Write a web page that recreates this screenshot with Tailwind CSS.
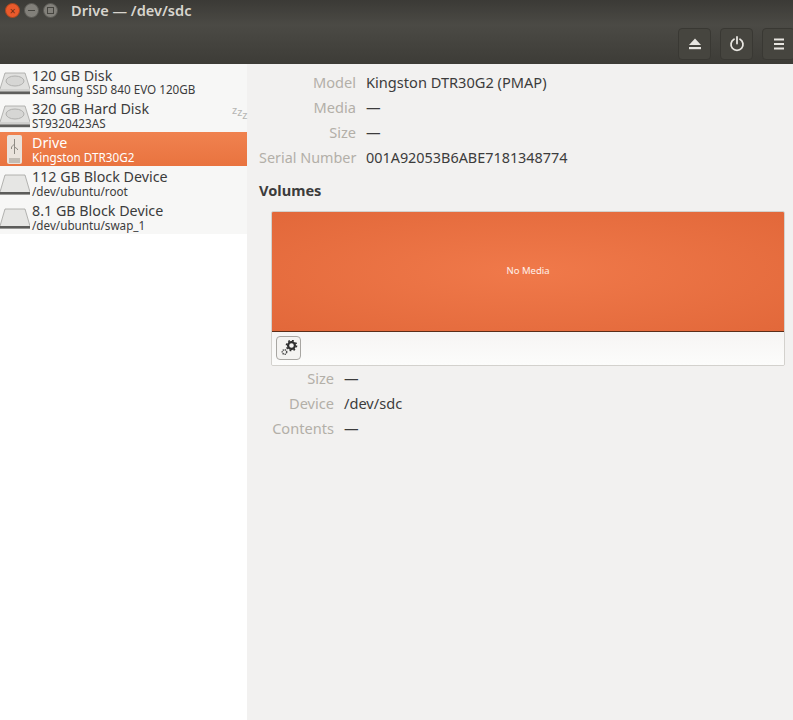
<!DOCTYPE html>
<html lang="en">
<head>
    <meta charset="UTF-8">
    <title>Drive — /dev/sdc</title>
    <script src="https://cdn.jsdelivr.net/npm/@tailwindcss/browser@4"></script>
</head>
<body class="w-[793px] h-[720px] overflow-hidden bg-[#f2f1f0] font-['Noto_Sans',sans-serif] text-[#3c3c3c]">
    <!-- window title -->
    <div class="h-[25px] flex items-start bg-gradient-to-b from-[#3b3a36] to-[#4b4a45]">
        <div class="flex items-center gap-[4px] pl-[5px] pt-[3px] w-[71px]">
            <span class="w-[15px] h-[15px] rounded-full bg-[#ea5a2c] border border-[#a8471f] flex items-center justify-center text-[10px] leading-none text-[#6b2a12]">×</span>
            <span class="w-[15px] h-[15px] rounded-full bg-[#82807a] border border-[#5a5954] flex items-center justify-center"><span class="w-[7px] h-px bg-[#45443f]"></span></span>
            <span class="w-[15px] h-[15px] rounded-full bg-[#82807a] border border-[#5a5954] flex items-center justify-center"><span class="w-[7px] h-[7px] border border-[#45443f]"></span></span>
        </div>
        <span class="text-[14.6px] leading-[21px] font-semibold text-[#d8d5ce]">Drive — /dev/sdc</span>
    </div>
    <!-- toolbar -->
    <div class="h-[39px] flex items-start justify-end gap-[9px] pt-[3px] bg-gradient-to-b from-[#4b4a45] to-[#3d3c37] overflow-hidden">
        <button class="w-[33px] h-[32px] rounded-[4px] border border-[#393833] bg-[#46453f] flex items-center justify-center">
            <svg width="14" height="14" viewBox="0 0 14 14" fill="#e8e6e1"><path d="M7 1.5 13 8H1Z"/><rect x="1" y="10" width="12" height="2.2"/></svg>
        </button>
        <button class="w-[33px] h-[32px] rounded-[4px] border border-[#393833] bg-[#46453f] flex items-center justify-center">
            <svg width="16" height="16" viewBox="0 0 16 16" fill="none" stroke="#e8e6e1" stroke-width="1.8" stroke-linecap="round"><path d="M5 3.2a6 6 0 1 0 6 0"/><path d="M8 1v6.5"/></svg>
        </button>
        <button class="w-[33px] h-[32px] -mr-[2px] rounded-[4px] border border-[#393833] bg-[#46453f] flex items-center justify-center">
            <svg width="12" height="12" viewBox="0 0 12 12" fill="#e8e6e1"><rect x="1" y="0.5" width="10" height="2"/><rect x="1" y="5" width="10" height="2"/><rect x="1" y="9.5" width="10" height="2"/></svg>
        </button>
    </div>

    <div class="flex h-[656px]">
        <!-- drive list -->
        <div class="w-[247px] h-full bg-white shrink-0">
            <div class="bg-[#f7f7f6] pt-[2px]">
                <div class="h-[32px] flex items-center relative">
                    <svg class="w-[30px] h-[24px] shrink-0 mt-[2px]" viewBox="0 0 30 24"><path d="M5 2h20l5 16v5H0v-5z" fill="#e0e0de" stroke="#a4a4a2" stroke-width=".8"/><ellipse cx="15" cy="10" rx="9" ry="5" fill="#d6d6d4" stroke="#b0b0ae"/><path d="M0 18h30v5H0z" fill="#d0d0ce"/><rect x="0" y="20.5" width="30" height="2.5" fill="#5e5e5c"/></svg>
                    <div class="pl-[2px]">
                        <div class="text-[14.3px] leading-[14px]">120 GB Disk</div>
                        <div class="text-[11.7px] leading-[13px]">Samsung SSD 840 EVO 120GB</div>
                    </div>
                </div>
                <div class="h-[34px] flex items-center relative">
                    <svg class="w-[30px] h-[24px] shrink-0 mt-[2px]" viewBox="0 0 30 24"><path d="M5 2h20l5 16v5H0v-5z" fill="#e0e0de" stroke="#a4a4a2" stroke-width=".8"/><ellipse cx="15" cy="10" rx="9" ry="5" fill="#d6d6d4" stroke="#b0b0ae"/><path d="M0 18h30v5H0z" fill="#d0d0ce"/><rect x="0" y="20.5" width="30" height="2.5" fill="#5e5e5c"/></svg>
                    <div class="pl-[2px]">
                        <div class="text-[14.3px] leading-[16px]">320 GB Hard Disk</div>
                        <div class="text-[11.7px] leading-[13px]">ST9320423AS</div>
                    </div>
                    <span class="absolute left-[232px] top-[8px] text-[11px] leading-[8px] text-[#b5b5b3]">z<span class="relative top-[2px]">z</span><span class="relative top-[5px]">z</span></span>
                </div>
                <div class="h-[34px] flex items-center bg-gradient-to-b from-[#f0824f] to-[#e9733f] text-white">
                    <svg class="w-[30px] h-[30px] shrink-0" viewBox="0 0 30 30"><rect x="7" y="1" width="15" height="29" rx="2" fill="#eae3dc"/><rect x="9" y="24" width="11" height="5" fill="#c2bcb4"/><path d="M14.5 5v15M14.5 10l-3 3v2M14.5 13l3 2v1" fill="none" stroke="#8f8b84" stroke-width="1"/></svg>
                    <div class="pl-[2px]">
                        <div class="text-[14.3px] leading-[16px]">Drive</div>
                        <div class="text-[11.7px] leading-[13px]">Kingston DTR30G2</div>
                    </div>
                </div>
                <div class="h-[34px] flex items-center">
                    <svg class="w-[30px] h-[24px] shrink-0 mt-[2px]" viewBox="0 0 30 24"><path d="M5 3h20l5 17v2H0v-2z" fill="#e6e6e4" stroke="#a2a2a0" stroke-width=".8"/><rect x="0" y="20" width="30" height="2.5" fill="#5c5c5a"/></svg>
                    <div class="pl-[2px]">
                        <div class="text-[14.3px] leading-[16px]">112 GB Block Device</div>
                        <div class="text-[11.7px] leading-[13px]">/dev/ubuntu/root</div>
                    </div>
                </div>
                <div class="h-[34px] flex items-center">
                    <svg class="w-[30px] h-[24px] shrink-0 mt-[2px]" viewBox="0 0 30 24"><path d="M5 3h20l5 17v2H0v-2z" fill="#e6e6e4" stroke="#a2a2a0" stroke-width=".8"/><rect x="0" y="20" width="30" height="2.5" fill="#5c5c5a"/></svg>
                    <div class="pl-[2px]">
                        <div class="text-[14.3px] leading-[16px]">8.1 GB Block Device</div>
                        <div class="text-[11.7px] leading-[13px]">/dev/ubuntu/swap_1</div>
                    </div>
                </div>
            </div>
        </div>

        <!-- details -->
        <div class="flex-1 pl-[12px] pr-[8px] pt-[6px] text-[14.6px]">
            <div class="grid grid-cols-[97px_1fr] gap-x-[10px] leading-[25px]">
                <div class="text-right text-[#b3afa8]">Model</div><div>Kingston DTR30G2 (PMAP)</div>
                <div class="text-right text-[#b3afa8]">Media</div><div>—</div>
                <div class="text-right text-[#b3afa8]">Size</div><div>—</div>
                <div class="text-right text-[#b3afa8] text-[14.4px] whitespace-nowrap">Serial Number</div><div class="text-[14.4px]">001A92053B6ABE7181348774</div>
            </div>
            <div class="mt-[8px] font-bold leading-[25px]">Volumes</div>
            <div class="ml-[12px] mt-[8px] h-[155px] rounded-[2px] border border-[#d3d1cd] overflow-hidden">
                <div class="h-[120px] border-b border-[#5a2e1a] bg-[radial-gradient(ellipse_at_center,#f0794a,#e2683a)] flex items-center justify-center text-[9.5px] text-white/90">No Media</div>
                <div class="h-[33px] p-[4px] bg-gradient-to-b from-[#f6f5f4] to-[#fcfcfb]">
                    <button class="w-[25px] h-[24px] rounded-[4px] border border-[#a8a6a2] bg-[#f4f3f1] flex items-center justify-center">
                        <svg width="18" height="16" viewBox="0 0 18 16"><circle cx="11.5" cy="5.5" r="3.4" fill="none" stroke="#2f2f2f" stroke-width="2.2"/><circle cx="11.5" cy="5.5" r="5" fill="none" stroke="#2f2f2f" stroke-width="1.6" stroke-dasharray="1.8 2.1"/><circle cx="4.5" cy="12" r="2.2" fill="none" stroke="#4c4c4c" stroke-width="1.5" stroke-dasharray="1.2 .7"/></svg>
                    </button>
                </div>
            </div>
            <div class="grid grid-cols-[63px_1fr] gap-x-[10px] leading-[25px] ml-[12px]">
                <div class="text-right text-[#b3afa8]">Size</div><div>—</div>
                <div class="text-right text-[#b3afa8]">Device</div><div>/dev/sdc</div>
                <div class="text-right text-[#b3afa8]">Contents</div><div>—</div>
            </div>
        </div>
    </div>
</body>
</html>
